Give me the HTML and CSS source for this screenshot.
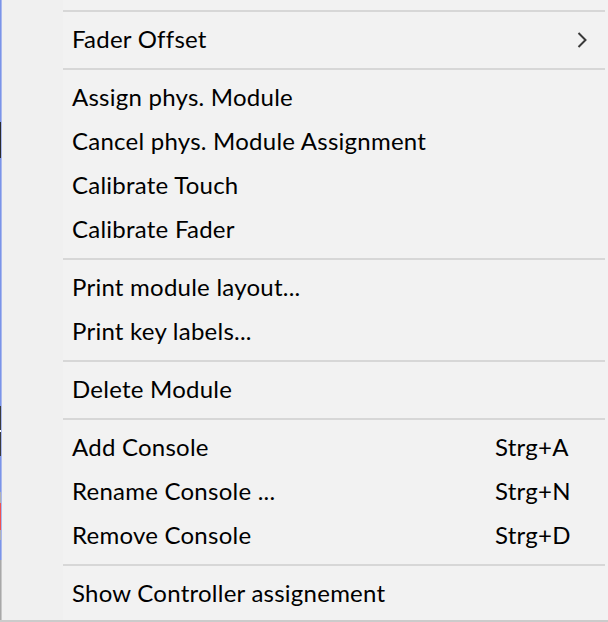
FILE: index.html
```html
<!DOCTYPE html>
<html>
<head>
<meta charset="utf-8">
<link rel="stylesheet" href="styles.css">
</head>
<body>
<div class="frame">
  <div class="edge"><div class="edge-a"></div><div class="edge-b"></div></div>
  <div class="menu">
    <div class="sep"></div>
    <div class="item"><span class="label">Fader Offset</span><svg class="chev" width="11" height="16" viewBox="0 0 11 16"><path d="M1.5 1 L8.5 8 L1.5 15" fill="none" stroke="#3a3a3a" stroke-width="2"/></svg></div>
    <div class="sep"></div>
    <div class="item"><span class="label">Assign phys. Module</span></div>
    <div class="item"><span class="label">Cancel phys. Module Assignment</span></div>
    <div class="item"><span class="label">Calibrate Touch</span></div>
    <div class="item"><span class="label">Calibrate Fader</span></div>
    <div class="sep"></div>
    <div class="item"><span class="label">Print module layout...</span></div>
    <div class="item"><span class="label">Print key labels...</span></div>
    <div class="sep"></div>
    <div class="item"><span class="label">Delete Module</span></div>
    <div class="sep"></div>
    <div class="item"><span class="label">Add Console</span><span class="key">Strg+A</span></div>
    <div class="item"><span class="label">Rename Console ...</span><span class="key">Strg+N</span></div>
    <div class="item"><span class="label">Remove Console</span><span class="key">Strg+D</span></div>
    <div class="sep"></div>
    <div class="item"><span class="label">Show Controller assignement</span></div>
  </div>
</div>
</body>
</html>
```
FILE: styles.css
```css
html, body {
  margin: 0;
  padding: 0;
  background: #f2f2f2;
}
body {
  width: 608px;
  height: 622px;
  overflow: hidden;
  font-family: Lato, "Noto Sans", sans-serif;
  font-size: 24px;
  letter-spacing: 0.24px;
  color: #000;
}
.frame {
  display: flex;
  height: 620px;
  border-bottom: 2px solid #cbcbcb;
}
.edge {
  display: flex;
  width: 2px;
  flex: none;
}
.edge-a {
  width: 1px;
  background: linear-gradient(to bottom,
    #7b94e8 0, #7b94e8 122px,
    #2b2b2b 122px, #2b2b2b 158px,
    #7b94e8 158px, #7b94e8 406px,
    #3a3a3a 406px, #3a3a3a 430px,
    #ffffff 430px, #ffffff 432px,
    #3a3a3a 432px, #3a3a3a 456px,
    #7b94e8 456px, #7b94e8 492px,
    #b0b0b0 492px, #b0b0b0 503px,
    #f05050 503px, #f05050 530px,
    #b0b0b0 530px, #b0b0b0 540px,
    #7b94e8 540px, #7b94e8 560px,
    #a8a8a8 560px, #a8a8a8 620px);
}
.edge-b {
  width: 1px;
  background: linear-gradient(to bottom, #a9b8ee 0, #a9b8ee 560px, #c8c8c8 560px);
}
.menu {
  flex: 1;
  padding-top: 4px;
  background: linear-gradient(to right, #f0f0f0 0, #f0f0f0 61px, #f2f2f2 61px);
}
.sep {
  height: 2px;
  margin: 6px 3px 6px 61px;
  background: #d7d7d7;
}
.item {
  box-sizing: border-box;
  display: flex;
  align-items: center;
  height: 44px;
  padding-left: 70px;
  padding-bottom: 4px;
  white-space: nowrap;
}
.label {
  flex: 1;
}
.key {
  width: 113px;
  flex: none;
}
.chev {
  flex: none;
  margin-right: 20px;
  margin-top: 4px;
}
```
